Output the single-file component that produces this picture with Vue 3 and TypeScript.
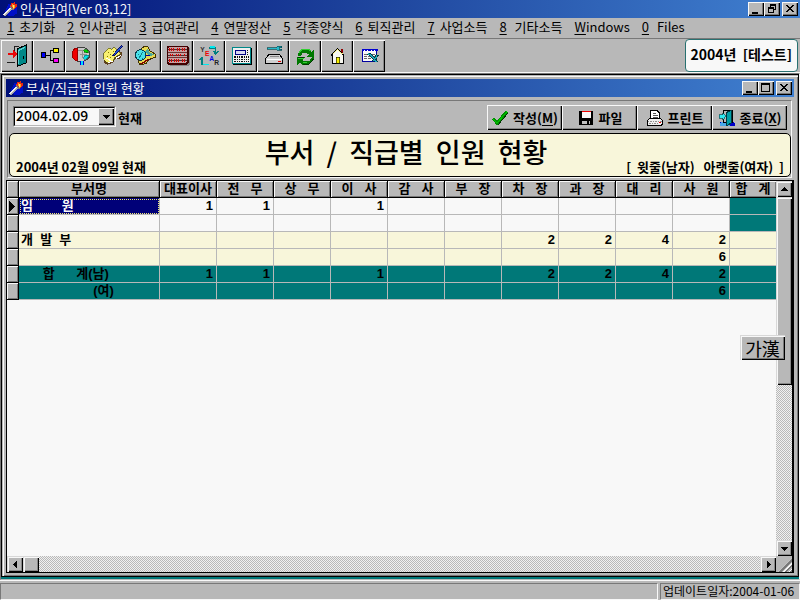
<script setup lang="ts">
import { ref } from 'vue'

interface MenuEntry {
  mnemonic: string
  rest: string
  joined?: boolean
}
interface Row {
  name: string
  tone: 'plain' | 'cream' | 'total'
  selected?: boolean
  values: string[]
}

const menus: MenuEntry[] = [
  { mnemonic: '1', rest: '초기화' },
  { mnemonic: '2', rest: '인사관리' },
  { mnemonic: '3', rest: '급여관리' },
  { mnemonic: '4', rest: '연말정산' },
  { mnemonic: '5', rest: '각종양식' },
  { mnemonic: '6', rest: '퇴직관리' },
  { mnemonic: '7', rest: '사업소득' },
  { mnemonic: '8', rest: ' 기타소득' },
  { mnemonic: 'W', rest: 'indows', joined: true },
  { mnemonic: '0', rest: ' Files' },
]

const tools = ['exit', 'org', 'globe', 'note', 'search', 'abacus', 'year', 'calc', 'device', 'refresh', 'home', 'window']

const columns = ['대표이사', '전   무', '상   무', '이   사', '감   사', '부   장', '차   장', '과   장', '대   리', '사   원', '합   계']

const rows: Row[] = [
  { name: '임        원', tone: 'plain', selected: true, values: ['1', '1', '', '1', '', '', '', '', '', '', ''] },
  { name: '', tone: 'plain', values: ['', '', '', '', '', '', '', '', '', '', ''] },
  { name: '개  발  부', tone: 'cream', values: ['', '', '', '', '', '', '2', '2', '4', '2', ''] },
  { name: '', tone: 'cream', values: ['', '', '', '', '', '', '', '', '', '6', ''] },
  { name: '      합      계(남)', tone: 'total', values: ['1', '1', '', '1', '', '', '2', '2', '4', '2', ''] },
  { name: '                    (여)', tone: 'total', values: ['', '', '', '', '', '', '', '', '', '6', ''] },
]

const company = '2004년  [테스트]'
const reportTitle = '부서  /  직급별  인원  현황'
const legend = '[  윗줄(남자)   아랫줄(여자)  ]'

const baseDate = ref('2004.02.09')
</script>

<template>
  <div class="app">
    <header class="titlebar">
      <svg class="torch" viewBox="0 0 48 48" aria-hidden="true">
        <path d="M20 9h16l9 12v16l-12 8H18L9 30z" fill="#0010c8" />
        <path d="M3 42 24 19l6 6L9 48z" fill="#a8a8a8" />
        <path d="M3 42 24 19l2 3L6 45z" fill="#f0f0f0" />
        <path d="M22 17l12 12 3-4-10-11z" fill="#787878" />
        <path d="M25 15 28 5l5 3 4-6 2 7 6 1-2 10-7 7z" fill="#e82810" />
        <path d="M29 16l3-7 5 4 3 3-5 8z" fill="#f8a020" />
        <path d="M32 16l3-3 2 5-3 3z" fill="#f8f060" />
      </svg>
      <h1>인사급여[Ver 03,12]</h1>
      <div class="win-buttons">
        <button type="button" aria-label="최소화"><svg viewBox="0 0 14 12"><path d="M3 9h6v2H3z" /></svg></button>
        <button type="button" aria-label="이전 크기로"><svg viewBox="0 0 14 12"><path d="M5 1h6v6H9V6h1V3H6v1H5zM3 4h6v6H3zM4 6v3h4V6z" fill-rule="evenodd" /></svg></button>
        <button type="button" class="close" aria-label="닫기"><svg viewBox="0 0 14 12"><path d="M3 2h2v1h1v1h2V3h1V2h2v1h-1v1H9v1H8v1h1v1h1v1h1v1H9V8H8V7H6v1H5v1H3V8h1V7h1V6h1V5H5V4H4V3H3z" /></svg></button>
      </div>
    </header>

    <nav class="menubar">
      <button v-for="m in menus" :key="m.mnemonic" type="button" :class="{ joined: m.joined }">
        <u>{{ m.mnemonic }}</u><span>{{ m.rest }}</span>
      </button>
    </nav>

    <div class="toolbar">
      <div class="tools">
        <button v-for="t in tools" :key="t" type="button" :aria-label="t">
          <svg viewBox="0 0 96 96" aria-hidden="true">
            <g v-if="t === 'exit'">
              <path d="M18 66h24v4H18zM39 18h3v15h-3zM42 18h12v3H42z" fill="#202020" />
              <path d="M48 27 75 15v54l-24 9h-3z" fill="#008888" stroke="#000" stroke-width="3" />
              <path d="M51 30 72 20v4L54 33v39h-3z" fill="#58d0d0" />
              <path d="M66 48h3v9h-3z" fill="#000" />
              <path d="M20 38h15v-8h4l9 12-9 12h-4v-8H20z" fill="#e80808" />
            </g>
            <g v-else-if="t === 'org'">
              <path d="M39 45h12M51 30v32M51 31h9M51 62h9" fill="none" stroke="#000" stroke-width="3" />
              <g stroke="#000" stroke-width="3"><path d="M25 38h12v15H25z" fill="#0000f8" /><path d="M60 26h16v10H60z" fill="#f8f000" /><path d="M60 56h16v11H60z" fill="#f800f8" /></g>
            </g>
            <g v-else-if="t === 'globe'">
              <path d="M37 21h18l12 6 7 9v14l-8 9-11 5H37z" fill="#c8c8c8" stroke="#404040" stroke-width="3" />
              <path d="M37 24 28 27 23 36v16l7 8 8 3V24z" fill="#f00000" stroke="#980000" stroke-width="3" />
              <path d="M40 32h12v21M45 43h20" fill="none" stroke="#909090" stroke-width="4" />
              <path d="M56 29h10l5 7-5 3-8-3z" fill="#00d000" stroke="#006000" stroke-width="2" />
              <path d="M59 46h12l-3 8-8 5-5-5z" fill="#00e0e8" stroke="#007878" stroke-width="2" />
              <path d="M45 63h12v13H45z" fill="#0000d8" /><path d="M49 63h4v13h-4z" fill="#00e0f8" />
            </g>
            <g v-else-if="t === 'note'">
              <path d="M21 44 36 27l9 3 6-7 25 16-5 16-18 4-5 10-18 5-10-7z" fill="#604020" />
              <path d="M21 39 35 24l10 4 6-7 21 20-18 11-6 12-18 4-10-10z" fill="#f8f070" stroke="#484800" stroke-width="2" />
              <path d="M26 53l15 9M34 68l14-5M57 55l15-8" stroke="#fff" stroke-width="3" />
              <path d="M32 37h3v3h-3zM39 41h3v3h-3zM30 47h3v3h-3zM40 52h3v3h-3zM48 34h3v3h-3z" fill="#807800" />
              <path d="M48 48 76 17" stroke="#101060" stroke-width="7" /><path d="M50 46 74 19" stroke="#2050d0" stroke-width="3" />
            </g>
            <g v-else-if="t === 'search'">
              <path d="M36 26 45 20h12l5 12 18 11v8L62 58l-11 12-17 5-5-8z" fill="#e8d850" stroke="#403000" stroke-width="3" />
              <path d="M57 26l5 11 17 8-19 3-12-12z" fill="#48a8a0" />
              <path d="M34 72l15-8 12-6" stroke="#800000" stroke-width="4" />
              <circle cx="35" cy="45" r="16" fill="#48e0e8" stroke="#083848" stroke-width="3" />
              <path d="M31 53l10-17M26 44h4M38 54h4" stroke="#108090" stroke-width="3" />
              <path d="M52 46h10" stroke="#0000a0" stroke-width="4" />
            </g>
            <g v-else-if="t === 'abacus'">
              <path d="M27 24h60v48l-6 6H27z" fill="#888" />
              <path d="M23 19h54l4 4v43l-5 5H23l-4-4V23z" fill="#c8a0a0" stroke="#400000" stroke-width="5" />
              <path d="M22 29h57M22 45h57M22 61h57" stroke="#000" stroke-width="2" />
              <path d="M24 29h18M48 29h9M63 29h12M27 45h12M45 45h18M69 45h6M24 61h9M39 61h18M63 61h12" stroke="#d80000" stroke-width="8" stroke-dasharray="4 2" />
              <path d="M21 37h57M21 53h57" stroke="#400000" stroke-width="2" />
            </g>
            <g v-else-if="t === 'year'">
              <path d="M48 24h20v18M62 33l6 10 9-10" fill="none" stroke="#008080" stroke-width="4" />
              <path d="M52 21h14" stroke="#00e8f0" stroke-width="4" />
              <path d="M27 52v22h22M20 61l8-10" fill="none" stroke="#008080" stroke-width="4" /><path d="M30 74h19" stroke="#00e8f0" stroke-width="4" />
              <g class="letters"><text x="22" y="36" fill="#303030">Y</text><text x="36" y="47" fill="#f00000">E</text><text x="49" y="62" fill="#0000f0">A</text><text x="64" y="76" fill="#202020">R</text></g>
            </g>
            <g v-else-if="t === 'calc'">
              <path d="M24 25h57v51H24z" fill="#000" /><path d="M21 22h57v50H21z" fill="#008888" /><path d="M24 25h51v45H24z" fill="#f0f0f0" />
              <path d="M30 30h33v14H30z" fill="#000080" /><path d="M33 33h27v8H33z" fill="#d8d8f0" />
              <path d="M28 51h45M28 58h45M28 65h45" stroke="#101010" stroke-width="4" stroke-dasharray="4 3" /><path d="M68 29v17" stroke="#101010" stroke-width="4" stroke-dasharray="4 3" />
            </g>
            <g v-else-if="t === 'device'">
              <path d="M30 23h28l4-4h12v4h-7v4h7v4H62l-4-3H30z" fill="#28b8c8" stroke="#004850" stroke-width="2" />
              <path d="M35 44h33l9 12v15H26V56z" fill="#d0d0d0" stroke="#000" stroke-width="3" />
              <path d="M29 57h45v3H29z" fill="#fff" /><path d="M39 50h26" stroke="#888" stroke-width="3" /><path d="M62 63h9v4h-9z" fill="#f00000" />
            </g>
            <g v-else-if="t === 'refresh'">
              <path d="M27 42 39 28h19l9 8 8-8v23H53l7-7-8-5H41L34 49H27z" fill="#007800" />
              <path d="M29 40 40 28h19l6 6" fill="none" stroke="#30d030" stroke-width="4" />
              <path d="M74 56 64 70 56 75H41l-8-7-8 6V52h22l-7 8 9 4 13-2 7-10h5z" fill="#007800" />
              <path d="M74 56 63 70 55 74H41M26 52h20" fill="none" stroke="#003800" stroke-width="3" /><path d="M27 54h17M41 66h12" stroke="#30d030" stroke-width="3" />
            </g>
            <g v-else-if="t === 'home'">
              <path d="M60 28h6v16h-6z" fill="#900000" /><path d="M34 46 50 29l16 17v24H34z" fill="#f8f8f0" />
              <path d="M34 45v24h33V45M29 47 50 27l20 20" fill="none" stroke="#000" stroke-width="3" />
              <path d="M35 43 50 29l15 14" fill="none" stroke="#f8f080" stroke-width="3" /><path d="M45 52h11v17H45z" fill="#f8f000" stroke="#202000" stroke-width="2" />
            </g>
            <g v-else>
              <path d="M28 28h43v37H28z" fill="#f8f8f8" stroke="#0000a0" stroke-width="4" /><path d="M26 26h48v8H26z" fill="#0000d0" />
              <path d="M33 31h3M43 31h3M53 31h3M63 31h3" stroke="#fff" stroke-width="3" />
              <path d="M32 42h36M32 49h36M32 56h36" stroke="#202020" stroke-width="2" stroke-dasharray="9 3" />
              <path d="M45 40 56 47 72 66M60 64l14-20" fill="none" stroke="#003840" stroke-width="8" /><path d="M46 41 56 48 70 66M62 62l10-15" fill="none" stroke="#20a8b8" stroke-width="4" />
            </g>
          </svg>
        </button>
      </div>
      <div class="year-box">{{ company }}</div>
    </div>

    <main class="workspace">
      <section class="child">
        <header class="titlebar child-title">
          <svg class="torch" viewBox="0 0 48 48" aria-hidden="true">
            <path d="M20 9h16l9 12v16l-12 8H18L9 30z" fill="#0010c8" />
            <path d="M3 42 24 19l6 6L9 48z" fill="#a8a8a8" />
            <path d="M3 42 24 19l2 3L6 45z" fill="#f0f0f0" />
            <path d="M22 17l12 12 3-4-10-11z" fill="#787878" />
            <path d="M25 15 28 5l5 3 4-6 2 7 6 1-2 10-7 7z" fill="#e82810" />
            <path d="M29 16l3-7 5 4 3 3-5 8z" fill="#f8a020" />
            <path d="M32 16l3-3 2 5-3 3z" fill="#f8f060" />
          </svg>
          <h2>부서/직급별 인원 현황</h2>
          <div class="win-buttons">
            <button type="button" aria-label="최소화"><svg viewBox="0 0 14 12"><path d="M3 9h6v2H3z" /></svg></button>
            <button type="button" aria-label="최대화"><svg viewBox="0 0 14 12"><path d="M2 1h9v9H2zM3 3v6h7V3z" fill-rule="evenodd" /></svg></button>
            <button type="button" class="close" aria-label="닫기"><svg viewBox="0 0 14 12"><path d="M3 2h2v1h1v1h2V3h1V2h2v1h-1v1H9v1H8v1h1v1h1v1h1v1H9V8H8V7H6v1H5v1H3V8h1V7h1V6h1V5H5V4H4V3H3z" /></svg></button>
          </div>
        </header>

        <div class="panel">
          <div class="controls">
            <div class="date-field">
              <span class="combo">
                <select id="base-date" v-model="baseDate"><option>2004.02.09</option></select>
                <i class="drop"><svg viewBox="0 0 7 4"><path d="M0 0h7v1H6v1H5v1H4v1H3V3H2V2H1V1H0z" /></svg></i>
              </span>
              <label for="base-date">현재</label>
            </div>
            <div class="actions">
              <button type="button">
                <svg viewBox="0 0 54 54"><path d="M3 30 9 25l9 9L45 5l5 3v4L22 45v4h-5z" fill="#009000" /><path d="M5 29l13 13L48 8" fill="none" stroke="#00c800" stroke-width="3" /><path d="M20 49 50 13" stroke="#003800" stroke-width="3" /></svg>
                <span>작성(<u>M</u>)</span>
              </button>
              <button type="button">
                <svg viewBox="0 0 54 54"><path d="M6 5h43v44H9l-3-3z" fill="#000" /><path d="M14 8h27v19H14z" fill="#f8f8f8" /><path d="M14 5h27v4H14z" fill="#f00000" /><path d="M15 35h24v11H15z" fill="#c0c0c0" /><path d="M30 37h6v9h-6z" fill="#000" /></svg>
                <span>파일</span>
              </button>
              <button type="button">
                <svg viewBox="0 0 54 54"><path d="M14 28V5h20l7 8v15" fill="#fff" stroke="#000" stroke-width="3" /><path d="M20 12h9M20 18h15M20 24h15" stroke="#000" stroke-width="2" /><path d="M10 28h34l6 7v9l-5 5H5V35z" fill="#f0f0f0" stroke="#000" stroke-width="3" /><path d="M6 36h43M8 43h30" stroke="#606060" stroke-width="2" stroke-dasharray="3 2" /><path d="M39 39h7v3h-7z" fill="#f00000" /></svg>
                <span>프린트</span>
              </button>
              <button type="button">
                <svg viewBox="0 0 54 54"><path d="M8 38h40l4 14H5z" fill="#0000c8" /><path d="M8 40h28v12H6z" fill="#48a8e8" /><path d="M16 4h27v35H16z" fill="#b8b8b8" stroke="#000" stroke-width="3" /><path d="M26 10 41 4v37L26 50z" fill="#00a0a8" stroke="#003840" stroke-width="3" /><path d="M3 17h11v-6l10 11-10 11v-6H3z" fill="#30e8f0" stroke="#004850" stroke-width="2" /></svg>
                <span>종료(<u>X</u>)</span>
              </button>
            </div>
          </div>
          <div class="heading">
            <p>2004년 02월 09일 현재</p>
            <h3>{{ reportTitle }}</h3>
            <p class="legend">{{ legend }}</p>
          </div>
        </div>

        <div class="grid">
          <div class="sheet">
            <table>
              <colgroup>
                <col class="c-mark" /><col class="c-name" />
                <col v-for="n in 10" :key="n" class="c-num" /><col />
              </colgroup>
              <thead>
                <tr><th></th><th>부서명</th><th v-for="c in columns" :key="c">{{ c }}</th></tr>
              </thead>
              <tbody>
                <tr v-for="(r, i) in rows" :key="i" :class="r.tone">
                  <td class="mark"><svg v-if="r.selected" viewBox="0 0 6 11"><path d="M0 0 6 5v1L0 11z" /></svg></td>
                  <td class="name" :class="{ selected: r.selected }">{{ r.name }}</td>
                  <td v-for="(v, j) in r.values" :key="j" class="num">{{ v }}</td>
                </tr>
              </tbody>
            </table>
          </div>
          <div class="vscroll">
            <button type="button" aria-label="위로"><svg viewBox="0 0 7 7"><path d="M3 1h1v1h1v1h1v1h1v1H0V4h1V3h1V2h1z" /></svg></button>
            <span class="thumb"></span>
            <button type="button" class="end" aria-label="아래로"><svg viewBox="0 0 7 7"><path d="M0 2h7v1H6v1H5v1H4v1H3V5H2V4H1V3H0z" /></svg></button>
          </div>
          <div class="hscroll">
            <button type="button" aria-label="왼쪽"><svg viewBox="0 0 7 7"><path d="M5 0v7H4V6H3V5H2V4H1V3h1V2h1V1h1V0z" /></svg></button>
            <span class="thumb"></span>
            <button type="button" class="end" aria-label="오른쪽"><svg viewBox="0 0 7 7"><path d="M2 0v7h1V6h1V5h1V4h1V3H5V2H4V1H3V0z" /></svg></button>
          </div>
          <div class="grip"></div>
          <button type="button" class="ime">가漢</button>
        </div>
      </section>
    </main>

    <footer class="status">
      <div></div>
      <div>업데이트일자:2004-01-06</div>
    </footer>
  </div>
</template>

<style>
body {
  margin: 0;
  background: #b8b8b8;
}
</style>

<style scoped>
.app {
  display: flex;
  flex-direction: column;
  min-height: 100vh;
  background: #b8b8b8;
  color: #000;
  font: 13px/16px "Noto Sans CJK KR", "Liberation Sans", sans-serif;
}
* {
  box-sizing: border-box;
}
button {
  margin: 0;
  padding: 0;
  border: 0;
  background: #b8b8b8;
  color: inherit;
  font: inherit;
}
svg {
  display: block;
  shape-rendering: crispEdges;
}
h1, h2, h3, p {
  margin: 0;
  font: inherit;
}
u {
  text-underline-offset: 2px;
}

.titlebar {
  display: flex;
  align-items: center;
  height: 18px;
  padding: 0 2px;
  background: linear-gradient(90deg, #001078, #2048a0 50%, #4080d0);
  color: #f8f8f8;
}
.torch {
  width: 16px;
  height: 16px;
  margin-right: 2px;
}
.titlebar h1, .titlebar h2 {
  line-height: 14px;
}
.win-buttons {
  display: flex;
  margin-left: auto;
}
.win-buttons button {
  width: 16px;
  height: 14px;
  padding: 1px;
  color: #000;
  box-shadow: inset 1px 1px #f8f8f8, inset -1px -1px #000, inset -2px -2px #787878;
}
.win-buttons .close {
  margin-left: 2px;
}
.win-buttons svg {
  width: 14px;
  height: 12px;
}

.menubar {
  display: flex;
  height: 21px;
  padding-left: 1px;
  border-bottom: 1px solid #787878;
}
.menubar button {
  display: flex;
  gap: 5px;
  padding: 0 6px;
  line-height: 17px;
  white-space: pre;
}
.menubar .joined {
  gap: 0;
}

.toolbar {
  display: flex;
  justify-content: space-between;
  height: 33px;
  padding: 0 2px 0 1px;
}
.tools {
  display: flex;
  padding-top: 1px;
}
.tools button {
  width: 32px;
  height: 32px;
  box-shadow: inset 1px 1px #f8f8f8, inset -1px -1px #000, inset -2px -2px #888;
}
.tools svg {
  width: 32px;
  height: 32px;
}
.letters {
  font: bold 20px "Liberation Sans", sans-serif;
}
.year-box {
  padding: 0 5px;
  border: 1px solid #287070;
  border-radius: 4px;
  background: #f8f8f8;
  font-size: 14px;
  font-weight: bold;
  line-height: 29px;
  white-space: pre;
}

.workspace {
  display: flex;
  flex: 1;
  border: 1px solid #787878;
  border-right-color: #f8f8f8;
  border-bottom-color: #b8b8b8;
  padding: 0 0 2px;
  background: #007878;
  box-shadow: 0 -1px #f8f8f8;
  margin-top: 1px;
}
.child {
  display: flex;
  flex: 1;
  flex-direction: column;
  min-width: 0;
  padding: 4px 4px 3px 4px;
  border: 1px solid #000;
  background: #b8b8b8;
  box-shadow: inset 1px 1px #b8b8b8, inset 2px 2px #f8f8f8, inset -1px -1px #787878;
}

.panel {
  margin: 3px 2px 2px 1px;
  border: 1px solid #787878;
  border-right-color: #f8f8f8;
  border-bottom-color: #f8f8f8;
}
.controls {
  display: flex;
  justify-content: space-between;
  height: 32px;
  padding: 4px 4px 0 5px;
}
.date-field {
  display: flex;
  gap: 2px;
  font-weight: bold;
  line-height: 26px;
}
.combo {
  display: flex;
  position: relative;
  width: 103px;
  height: 21px;
  margin-top: 1px;
  border: 1px solid #787878;
  border-right-color: #f8f8f8;
  border-bottom-color: #f8f8f8;
}
.combo select {
  appearance: none;
  flex: 1;
  margin: 0;
  padding: 0 1px 3px;
  border: 1px solid #000;
  border-right-color: #b8b8b8;
  border-bottom-color: #b8b8b8;
  border-radius: 0;
  background: #f8f8f8;
  color: #000;
  font: 500 14px/14px "Noto Sans CJK KR", sans-serif;
}
.drop {
  display: grid;
  place-items: center;
  position: absolute;
  top: 1px;
  right: 1px;
  bottom: 1px;
  width: 16px;
  background: #b8b8b8;
  box-shadow: inset 1px 1px #f8f8f8, inset -1px -1px #000, inset -2px -2px #787878;
  pointer-events: none;
}
.drop svg {
  width: 7px;
  height: 4px;
}
.actions {
  display: flex;
}
.actions button {
  display: flex;
  align-items: center;
  justify-content: center;
  gap: 4px;
  width: 75px;
  height: 25px;
  font-weight: bold;
  line-height: 14px;
  box-shadow: inset 1px 1px #f8f8f8, inset -1px -1px #000, inset -2px -2px #888;
}
.actions svg {
  width: 18px;
  height: 18px;
}
.heading {
  display: grid;
  grid-template-columns: 1fr auto 1fr;
  align-items: end;
  height: 44px;
  margin-left: 1px;
  padding: 0 6px 2px;
  border: 1px solid #000;
  border-radius: 5px;
  background: #f8f6da;
  font-weight: bold;
  white-space: pre;
}
.heading h3 {
  padding: 0 0 5px 12px;
  font-size: 27px;
  font-weight: 500;
  line-height: 36px;
}
.legend {
  text-align: right;
}

.grid {
  display: grid;
  position: relative;
  flex: 1;
  grid-template: 1fr 16px / minmax(0, 1fr) 16px;
  border: 1px solid #000;
  border-right-width: 2px;
  background: #b8b8b8;
}
.sheet {
  overflow: hidden;
  background: #f8f8f8;
}
table {
  width: 100%;
  border-collapse: separate;
  border-spacing: 0;
  table-layout: fixed;
  font-family: "Liberation Sans", "Noto Sans CJK KR", sans-serif;
  font-weight: bold;
  line-height: 16px;
  white-space: pre;
}
.c-mark {
  width: 12px;
}
.c-name {
  width: 141px;
}
.c-num {
  width: 57px;
}
th {
  height: 17px;
  padding: 0;
  border-right: 1px solid #000;
  border-bottom: 1px solid #000;
  background: #b8b8b8;
  box-shadow: inset 1px 1px #f8f8f8, inset -1px -1px #787878;
}
td {
  height: 17px;
  padding: 0 3px;
  border-right: 1px solid #b8b8b8;
  border-bottom: 1px solid #b8b8b8;
}
th:last-child, td:last-child {
  border-right: 0;
}
.cream td {
  background: #f8f6da;
}
.total td, .plain td:last-child {
  background: #007878;
}
tr td.mark {
  padding: 0 2px;
  border-color: #000;
  background: #b8b8b8;
  box-shadow: inset 1px 1px #f8f8f8, inset -1px -1px #787878;
}
.mark svg {
  width: 6px;
  height: 11px;
}
.num {
  text-align: right;
}
td.name {
  padding: 0 2px;
}
td.selected {
  background: #000078;
  color: #f8f8f8;
  outline: 1px dotted #f0e878;
  outline-offset: -2px;
}

.vscroll, .hscroll {
  display: flex;
  background: repeating-conic-gradient(#b8b8b8 0 25%, #f0f0f0 0 50%) 0 0 / 2px 2px;
}
.vscroll {
  flex-direction: column;
}
.vscroll button, .hscroll button {
  display: grid;
  place-items: center;
  width: 16px;
  height: 16px;
}
.vscroll button, .hscroll button, .thumb {
  background: #b8b8b8;
  box-shadow: inset 1px 1px #d8d8d8, inset 2px 2px #f8f8f8, inset -1px -1px #000, inset -2px -2px #888;
}
.vscroll svg, .hscroll svg {
  width: 7px;
  height: 7px;
}
.vscroll .thumb {
  height: 50%;
}
.vscroll .end {
  margin-top: auto;
}
.hscroll .thumb {
  width: 16px;
}
.hscroll .end {
  margin-left: auto;
}
.grip {
  background: repeating-linear-gradient(135deg, #f8f8f8 0 1px, #787878 1px 3px, #b8b8b8 3px 4px);
  clip-path: polygon(100% 15%, 100% 100%, 15% 100%);
}
.ime {
  position: absolute;
  top: 154px;
  right: 7px;
  width: 45px;
  height: 25px;
  font-size: 18px;
  line-height: 22px;
  box-shadow: inset 1px 1px #d8d8d8, inset 2px 2px #f8f8f8, inset -1px -1px #000, inset -2px -2px #787878;
}

.status {
  display: grid;
  grid-template-columns: 1fr 140px;
  gap: 2px;
  height: 20px;
  padding: 2px 0 0;
  border-top: 1px solid #f8f8f8;
}
.status div {
  padding: 0 2px;
  border: 1px solid #787878;
  border-right-color: #f8f8f8;
  border-bottom-color: #f8f8f8;
  font-size: 12px;
  line-height: 14px;
  white-space: nowrap;
}
</style>
